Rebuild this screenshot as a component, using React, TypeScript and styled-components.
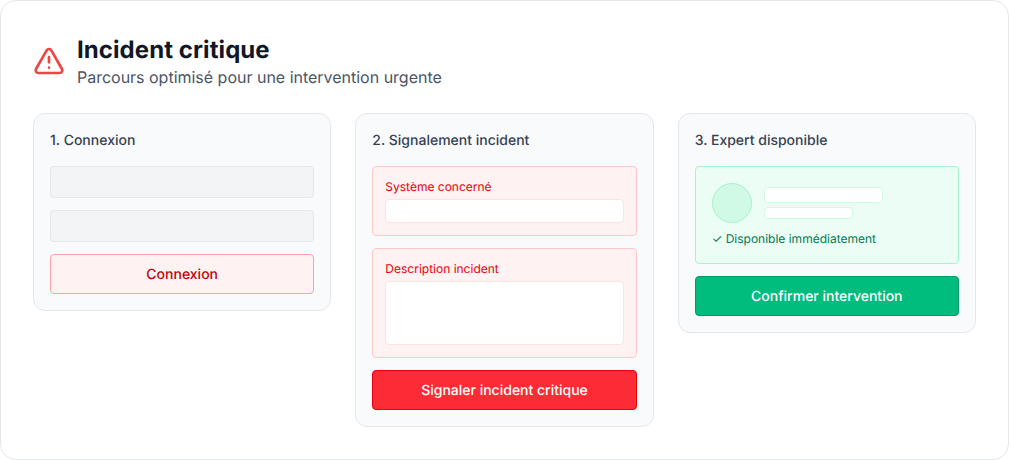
import React from "react";
import styled, { createGlobalStyle } from "styled-components";
import { TriangleAlert } from "lucide-react";

const GlobalStyle = createGlobalStyle`
  *, *::before, *::after { box-sizing: border-box; }
  body {
    margin: 0;
    background: #fff;
    font-family: Inter, "Liberation Sans", sans-serif;
    text-rendering: geometricPrecision;
  }
`;

const Panel = styled.main`
  min-height: 460px;
  padding: 32px;
  background: #fff;
  border: 1px solid #e5e7eb;
  border-radius: 16px;
`;

const Header = styled.header`
  display: flex;
  align-items: center;
  gap: 12px;
  margin-bottom: 24px;
`;

const AlertIcon = styled(TriangleAlert)`
  flex: none;
  width: 32px;
  height: 32px;
  color: #ef4444;
`;

const Title = styled.h2`
  margin: 0 0 -2px;
  font-size: 24px;
  line-height: 34px;
  font-weight: 700;
  letter-spacing: 0.08px;
  color: #101828;
`;

const Subtitle = styled.p`
  margin: 0;
  font-size: 16px;
  line-height: 24px;
  letter-spacing: -0.01px;
  color: #4a5565;
`;

const Steps = styled.div`
  display: grid;
  grid-template-columns: repeat(3, minmax(0, 1fr));
  align-items: start;
  gap: 24px;
`;

const Step = styled.section`
  padding: 16px;
  background: #f9fafb;
  border: 1px solid #e5e7eb;
  border-radius: 12px;
`;

const StepTitle = styled.h3`
  margin: 0 0 14px;
  font-size: 14px;
  line-height: 22px;
  font-weight: 500;
  color: #364153;
`;

const Stack = styled.div`
  display: flex;
  flex-direction: column;
  gap: 12px;
`;

const Placeholder = styled.div`
  height: 32px;
  background: #f3f4f6;
  border: 1px solid #e5e7eb;
  border-radius: 4px;
`;

const tones = {
  soft: { bg: "#fef2f2", border: "#ffa2a2", text: "#c10007" },
  danger: { bg: "#fb2c36", border: "#e7000b", text: "#fff" },
  success: { bg: "#00bc7d", border: "#009966", text: "#fff" },
};

const Action = styled.button<{ $tone: keyof typeof tones }>`
  display: flex;
  align-items: center;
  justify-content: center;
  height: 40px;
  padding: 2px 0 0;
  font: 500 14px/20px Inter, "Liberation Sans", sans-serif;
  text-rendering: inherit;
  color: ${(p) => tones[p.$tone].text};
  background: ${(p) => tones[p.$tone].bg};
  border: 1px solid ${(p) => tones[p.$tone].border};
  border-radius: 4px;
`;

const Field = styled.div`
  padding: 12px;
  background: #fef2f2;
  border: 1px solid #ffc9c9;
  border-radius: 4px;
`;

const FieldLabel = styled.p`
  margin: 0 0 4px;
  font-size: 12px;
  line-height: 16px;
  color: #e7000b;
`;

const FieldBox = styled.div<{ $height: number }>`
  height: ${(p) => p.$height}px;
  background: #fff;
  border: 1px solid #ffe2e2;
  border-radius: 4px;
`;

const Expert = styled.div`
  padding: 16px;
  background: #ecfdf5;
  border: 1px solid #a4f4cf;
  border-radius: 4px;
`;

const Profile = styled.div`
  display: flex;
  align-items: center;
  gap: 12px;
  margin-bottom: 8px;
`;

const Avatar = styled.div`
  flex: none;
  width: 40px;
  height: 40px;
  background: #d0fae5;
  border: 1px solid #a4f4cf;
  border-radius: 50%;
`;

const Lines = styled.div`
  display: flex;
  flex: 1;
  flex-direction: column;
  gap: 4px;
`;

const Line = styled.div<{ $width: string; $height: number }>`
  width: ${(p) => p.$width};
  height: ${(p) => p.$height}px;
  background: #fff;
  border: 1px solid #d0fae5;
  border-radius: 4px;
`;

const Availability = styled.p`
  margin: 0;
  font-size: 12px;
  line-height: 16px;
  color: #007a55;
`;

export default function App() {
  return (
    <>
      <GlobalStyle />
      <Panel>
        <Header>
          <AlertIcon />
          <div>
            <Title>Incident critique</Title>
            <Subtitle>Parcours optimisé pour une intervention urgente</Subtitle>
          </div>
        </Header>
        <Steps>
          <Step>
            <StepTitle>1. Connexion</StepTitle>
            <Stack>
              <Placeholder />
              <Placeholder />
              <Action $tone="soft">Connexion</Action>
            </Stack>
          </Step>
          <Step>
            <StepTitle>2. Signalement incident</StepTitle>
            <Stack>
              <Field>
                <FieldLabel>Système concerné</FieldLabel>
                <FieldBox $height={24} />
              </Field>
              <Field>
                <FieldLabel>Description incident</FieldLabel>
                <FieldBox $height={64} />
              </Field>
              <Action $tone="danger">Signaler incident critique</Action>
            </Stack>
          </Step>
          <Step>
            <StepTitle>3. Expert disponible</StepTitle>
            <Stack>
              <Expert>
                <Profile>
                  <Avatar />
                  <Lines>
                    <Line $width="66.6667%" $height={16} />
                    <Line $width="50%" $height={12} />
                  </Lines>
                </Profile>
                <Availability>✓ Disponible immédiatement</Availability>
              </Expert>
              <Action $tone="success">Confirmer intervention</Action>
            </Stack>
          </Step>
        </Steps>
      </Panel>
    </>
  );
}
